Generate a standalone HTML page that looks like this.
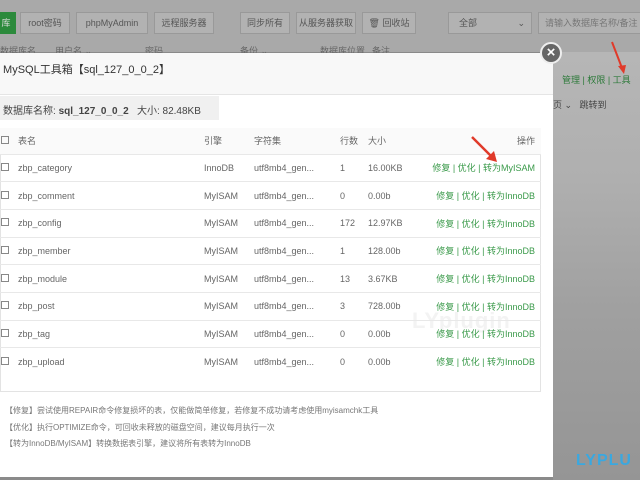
<!DOCTYPE html>
<html><head><meta charset="utf-8"><style>
*{margin:0;padding:0;box-sizing:border-box}
body{width:640px;height:480px;overflow:hidden;position:relative;font-family:"Liberation Sans","Noto Sans CJK SC",sans-serif;font-size:9px;color:#555;background:#8a8a8a}
.top{position:absolute;left:0;top:0;width:640px;height:52px;background:#a9a9a9}
.btn{position:absolute;top:12px;height:22px;border:1px solid #999;background:#b2b2b2;color:#555;font-size:9px;line-height:20px;text-align:center}
.rt{position:absolute;left:553px;top:52px;width:87px;height:428px;background:linear-gradient(180deg,#b6b6b6 0%,#afafaf 30%,#a0a0a0 60%,#959595 100%)}
.modal{position:absolute;left:0;top:53px;width:553px;height:424px;background:#fff}
.title{height:42px;border-bottom:1px solid #e5e5e5;background:#f8f8f8;padding:8px 0 0 0;font-size:11px;color:#333}
.info{position:absolute;left:0;top:96px;width:219px;height:24px;background:#f0f0f0;font-size:10px;color:#444;padding:6px 0 0 3px}
.tbox{position:absolute;left:0;top:128px;width:541px;height:264px;border:1px solid #e3e3e3}
table{position:absolute;left:0;top:128px;width:541px;border-collapse:collapse}
td{height:27.7px;border-bottom:1px solid #e8e8e8;font-size:9px;color:#666;white-space:nowrap}
tr:first-child td{background:#fafafa;height:26px}
tr:last-child td{border-bottom:none}
.cb{display:inline-block;width:8px;height:8px;border:1px solid #888;margin-left:1px}
.g{color:#3a9a4a;text-align:right;padding-right:6px}
.notes{position:absolute;left:5px;top:403px;font-size:8px;color:#777;line-height:16.5px}
.close{position:absolute;left:540px;top:42px;width:22px;height:22px;border-radius:50%;background:#666;border:2px solid #eee;color:#fff;text-align:center;line-height:17px;font-size:15px;font-weight:bold}
.bh{position:absolute;top:44px;font-size:9px;color:#666}
</style></head><body>
<div class="top"></div>
<div class="btn" style="left:-4px;width:20px;background:#2c8a3c;border-color:#2c8a3c;color:#ddd">库</div>
<div class="btn" style="left:20px;width:50px">root密码</div>
<div class="btn" style="left:76px;width:72px">phpMyAdmin</div>
<div class="btn" style="left:154px;width:60px">远程服务器</div>
<div class="btn" style="left:240px;width:50px">同步所有</div>
<div class="btn" style="left:296px;width:60px">从服务器获取</div>
<div class="btn" style="left:362px;width:54px">🗑 回收站</div>
<div class="btn" style="left:448px;width:84px;text-align:left;padding-left:10px">全部 <span style="float:right;margin-right:6px">⌄</span></div>
<div class="btn" style="left:538px;width:110px;text-align:left;padding-left:6px;color:#777">请输入数据库名称/备注</div>
<div class="bh" style="left:0">数据库名</div><div class="bh" style="left:55px">用户名 ⌄</div><div class="bh" style="left:145px">密码</div><div class="bh" style="left:240px">备份 ⌄</div><div class="bh" style="left:320px">数据库位置</div><div class="bh" style="left:372px">备注</div>
<div class="rt"></div>
<div style="position:absolute;left:562px;top:73px;font-size:9px;color:#2d7a3a">管理 | 权限 | 工具</div>
<div style="position:absolute;left:553px;top:98px;font-size:9px;color:#444">页 ⌄ &nbsp; 跳转到</div>
<div style="position:absolute;left:576px;top:452px;font-size:16px;font-weight:bold;color:#3aa8e0;letter-spacing:1px">LYPLU</div>
<div class="modal">
<div class="title">&nbsp;MySQL工具箱【sql_127_0_0_2】</div>
</div>
<div class="info">数据库名称: <b>sql_127_0_0_2</b> &nbsp; 大小: 82.48KB</div>
<div class="tbox"></div>
<div style="position:absolute;left:412px;top:308px;font-size:22px;font-weight:bold;color:#f3f3f3;letter-spacing:1px">LYplugin</div>
<table>
<tr><td style="width:18px"><span class="cb"></span></td><td style="width:186px">表名</td><td style="width:50px">引擎</td><td style="width:86px">字符集</td><td style="width:28px">行数</td><td style="width:60px">大小</td><td class="g" style="color:#666">操作</td></tr>
<tr><td><span class="cb"></span></td><td>zbp_category</td><td>InnoDB</td><td>utf8mb4_gen...</td><td>1</td><td>16.00KB</td><td class="g">修复 | 优化 | 转为MyISAM</td></tr>
<tr><td><span class="cb"></span></td><td>zbp_comment</td><td>MyISAM</td><td>utf8mb4_gen...</td><td>0</td><td>0.00b</td><td class="g">修复 | 优化 | 转为InnoDB</td></tr>
<tr><td><span class="cb"></span></td><td>zbp_config</td><td>MyISAM</td><td>utf8mb4_gen...</td><td>172</td><td>12.97KB</td><td class="g">修复 | 优化 | 转为InnoDB</td></tr>
<tr><td><span class="cb"></span></td><td>zbp_member</td><td>MyISAM</td><td>utf8mb4_gen...</td><td>1</td><td>128.00b</td><td class="g">修复 | 优化 | 转为InnoDB</td></tr>
<tr><td><span class="cb"></span></td><td>zbp_module</td><td>MyISAM</td><td>utf8mb4_gen...</td><td>13</td><td>3.67KB</td><td class="g">修复 | 优化 | 转为InnoDB</td></tr>
<tr><td><span class="cb"></span></td><td>zbp_post</td><td>MyISAM</td><td>utf8mb4_gen...</td><td>3</td><td>728.00b</td><td class="g">修复 | 优化 | 转为InnoDB</td></tr>
<tr><td><span class="cb"></span></td><td>zbp_tag</td><td>MyISAM</td><td>utf8mb4_gen...</td><td>0</td><td>0.00b</td><td class="g">修复 | 优化 | 转为InnoDB</td></tr>
<tr><td><span class="cb"></span></td><td>zbp_upload</td><td>MyISAM</td><td>utf8mb4_gen...</td><td>0</td><td>0.00b</td><td class="g">修复 | 优化 | 转为InnoDB</td></tr>
</table>
<div class="notes">【修复】尝试使用REPAIR命令修复损坏的表，仅能做简单修复，若修复不成功请考虑使用myisamchk工具<br>【优化】执行OPTIMIZE命令，可回收未释放的磁盘空间，建议每月执行一次<br>【转为InnoDB/MyISAM】转换数据表引擎，建议将所有表转为InnoDB</div>
<div class="close">×</div>
<svg style="position:absolute;left:470px;top:135px" width="30" height="30"><line x1="2" y1="2" x2="24" y2="24" stroke="#e03a2a" stroke-width="2.5"/><polygon points="27,27 16,24 24,16" fill="#e03a2a"/></svg>
<svg style="position:absolute;left:610px;top:40px" width="20" height="35"><line x1="2" y1="2" x2="12" y2="28" stroke="#e03a2a" stroke-width="2"/><polygon points="14,34 8,26 16,25" fill="#e03a2a"/></svg>
</body></html>
